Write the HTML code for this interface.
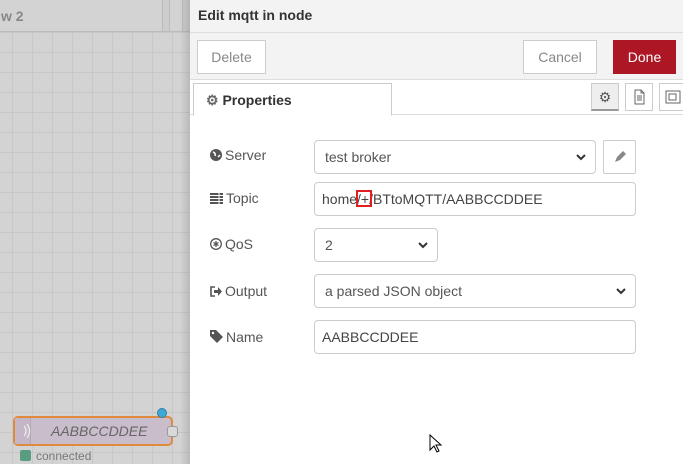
<!DOCTYPE html>
<html><head><style>
*{box-sizing:border-box}
body{margin:0;width:683px;height:464px;overflow:hidden;font-family:"Liberation Sans",sans-serif;font-size:14px;color:#555;position:relative;background:#fff}
.canvas{position:absolute;left:0;top:0;width:190px;height:464px;background-color:#d3d3d3;
background-image:linear-gradient(#c8c8c8 1px,transparent 1px),linear-gradient(90deg,#c8c8c8 1px,transparent 1px);background-size:20px 20px;background-position:-8px 12px}
.tabs{position:absolute;left:0;top:0;width:190px;height:32px;background:#cdcdcd;border-bottom:1px solid #bbb}
.t1{position:absolute;left:-10px;top:0;width:173px;height:32px;background:#d3d3d3;border:1px solid #bbb;border-top:none;font-weight:bold;color:#888;padding:8px 0 0 10px}
.t2{position:absolute;left:169px;top:0;width:14px;height:32px;background:#d3d3d3;border:1px solid #bbb;border-top:none}
.shadow{position:absolute;left:180px;top:0;width:10px;height:464px;background:linear-gradient(90deg,rgba(0,0,0,0),rgba(0,0,0,.12))}
.panel{position:absolute;left:190px;top:0;width:493px;height:464px;background:#fff}
.hdr{height:33px;background:#f3f3f3;border-bottom:1px solid #ddd;font-weight:bold;color:#333;padding:7px 0 0 8px;font-size:14px}
.btnrow{height:47px;background:#f3f3f3;border-bottom:1px solid #ddd;position:relative}
.btn{position:absolute;top:7px;height:34px;border:1px solid #ccc;background:#fff;color:#888;text-align:center;line-height:32px;font-size:14px}
.tabbar{position:absolute;top:80px;left:0;width:493px;height:35px;background:#fff;border-bottom:1px solid #ddd}
.ptab{position:absolute;left:3px;top:3px;width:199px;height:33px;border:1px solid #ccc;border-bottom:1px solid #fff;background:#fff;font-weight:bold;color:#333;padding:8px 0 0 12px}
.ib{position:absolute;top:3px;width:28px;height:28px;border:1px solid #ccc;background:#fff}
.lbl{position:absolute;left:20px;color:#555;font-size:14px}
.lbl svg{vertical-align:-1px;margin-right:3px}
.inp{position:absolute;left:124px;height:34px;border:1px solid #ccc;border-radius:4px;background:#fff;color:#555;padding:8px 0 0 10px;font-size:14px}
.chev{position:absolute;right:8px;top:9px}
.node{position:absolute;left:13px;top:416px;width:160px;height:30px;background:#c9bccb;border:2px solid #e08a3e;border-radius:5px}
</style></head><body>
<div class="canvas"></div>
<div class="tabs"><div class="t1">w 2</div><div class="t2"></div></div>
<div class="node"><div style="position:absolute;left:0;top:0;width:16px;height:26px;border-right:1px solid #b5a9b6;background:#c4b6c6"></div>
<svg style="position:absolute;left:7px;top:6px" width="10" height="14"><path d="M2 2q4 5 0 10M5 0q5 7 0 14" stroke="#eee" fill="none" stroke-width="1.2"/></svg>
<div style="position:absolute;left:36px;top:5px;font-style:italic;color:#666;font-size:14px">AABBCCDDEE</div></div>
<div style="position:absolute;left:157px;top:408px;width:10px;height:10px;border-radius:50%;background:#3fa9d6;border:1px solid #2e7fa3"></div>
<div style="position:absolute;left:167px;top:426px;width:11px;height:11px;border-radius:3px;background:#d9d9d9;border:1px solid #999"></div>
<div style="position:absolute;left:20px;top:450px;width:11px;height:11px;border-radius:2px;background:#5a9c80"></div>
<div style="position:absolute;left:36px;top:449px;font-size:12px;color:#777">connected</div>
<div class="shadow"></div>
<div class="panel">
<div class="hdr">Edit mqtt in node</div>
<div class="btnrow">
<div class="btn" style="left:7px;width:69px">Delete</div>
<div class="btn" style="left:333px;width:74px">Cancel</div>
<div class="btn" style="left:423px;width:63px;background:#ad1625;border-color:#ad1625;color:#fff">Done</div>
</div>
<div class="tabbar">
<div class="ptab"><span style="color:#666">⚙</span> Properties</div>
<div class="ib" style="left:401px;background:#eee;border-bottom:2px solid #999;text-align:center;line-height:26px;color:#555">⚙</div>
<div class="ib" style="left:435px"><svg width="26" height="26"><path d="M9 6h6l3 3v11H9z M15 6v3h3 M11 12h5M11 14h5M11 16h5" stroke="#666" fill="none"/></svg></div>
<div class="ib" style="left:469px"><svg width="26" height="26"><rect x="6" y="7" width="14" height="12" stroke="#666" fill="none"/><rect x="9" y="10" width="7" height="6" stroke="#666" fill="none"/></svg></div>
</div>
<div class="lbl" style="top:147px"><svg width="12" height="12"><circle cx="6" cy="6" r="6" fill="#555"/><path d="M3 3q3 1 2 4M8 8l2-2" stroke="#fff" stroke-width="1.5" fill="none"/></svg>Server</div>
<div class="inp" style="top:140px;width:282px">test broker<svg class="chev" width="12" height="14"><path d="M2 5l4 4 4-4" stroke="#333" stroke-width="2" fill="none"/></svg></div>
<div class="inp" style="top:140px;left:413px;width:33px;border-radius:2px;padding:0"><svg width="31" height="32"><path d="M11 21l2-5 6-6 3 3-6 6z" fill="#888"/></svg></div>
<div class="lbl" style="top:190px"><svg width="13" height="11"><path d="M0 1h13M0 4h13M0 7h13M0 10h13" stroke="#555" stroke-width="2"/><path d="M9 0v11" stroke="#fff"/></svg>Topic</div>
<div class="inp" style="top:182px;width:322px;padding-left:7px;color:#444">home/+/BTtoMQTT/AABBCCDDEE</div>
<div style="position:absolute;left:166px;top:190px;width:16px;height:17px;border:2px solid #e02020"></div>
<div class="lbl" style="top:236px"><svg width="12" height="12"><circle cx="6" cy="6" r="5.3" fill="none" stroke="#555" stroke-width="1.3"/><path d="M6 3v6M3.5 4.5l5 3M8.5 4.5l-5 3" stroke="#555" stroke-width="1.3"/></svg>QoS</div>
<div class="inp" style="top:228px;width:124px">2<svg class="chev" width="12" height="14"><path d="M2 5l4 4 4-4" stroke="#333" stroke-width="2" fill="none"/></svg></div>
<div class="lbl" style="top:283px"><svg width="12" height="11"><path d="M5 1H1v9h4" stroke="#555" stroke-width="1.6" fill="none"/><path d="M4 4h4V1l4 4.5-4 4.5V7H4z" fill="#555"/></svg>Output</div>
<div class="inp" style="top:274px;width:322px">a parsed JSON object<svg class="chev" width="12" height="14"><path d="M2 5l4 4 4-4" stroke="#333" stroke-width="2" fill="none"/></svg></div>
<div class="lbl" style="top:329px"><svg width="13" height="13"><path d="M0 0h6l7 7-6 6-7-7z" fill="#555"/><circle cx="3" cy="3" r="1.2" fill="#fff"/></svg>Name</div>
<div class="inp" style="top:320px;width:322px;padding-left:7px;color:#444">AABBCCDDEE</div>
<svg style="position:absolute;left:239px;top:434px" width="14" height="20"><path d="M1 1v15l4-4 3 6 2-1-3-6h5z" fill="#fff" stroke="#000"/></svg>
</div>
</body></html>
